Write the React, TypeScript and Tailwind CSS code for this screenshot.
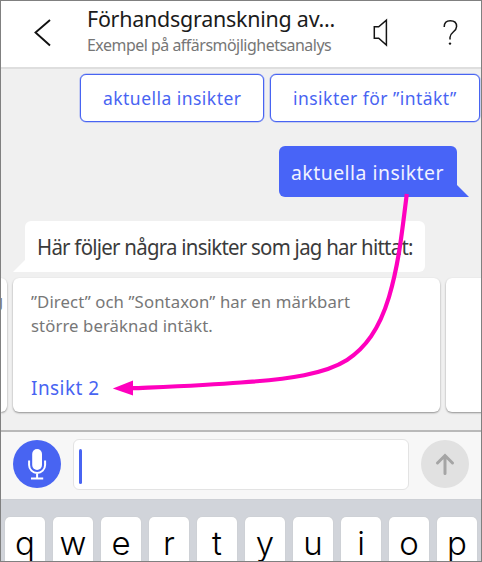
import type { ReactNode } from "react";

const keys = ["q", "w", "e", "r", "t", "y", "u", "i", "o", "p"];

function Fit({ className, children }: { className: string; children: ReactNode }) {
  return <span className={`inline-block whitespace-nowrap origin-left ${className}`}>{children}</span>;
}

function Header() {
  return (
    <header className="flex h-[66px] shrink-0 bg-white">
      <svg className="ml-[32px] mt-[17px] h-[30px] w-[20px] shrink-0" viewBox="0 0 20 30" fill="none" stroke="#111" strokeWidth="1.9">
        <path d="M17 2 L2.5 14.5 L17 27.5" />
      </svg>
      <div className="ml-[34px] w-[269px] shrink-0">
        <h1 className="h-[33px] pt-[3px] text-[22.5px] leading-[30px] text-[#1b1b1b]">
          <Fit className="tracking-[-0.25px] scale-x-[0.953]">Förhandsgranskning av...</Fit>
        </h1>
        <p className="text-[16.5px] leading-[22px] text-[#767676]">
          <Fit className="tracking-[-0.5px] scale-x-[0.965]">Exempel på affärsmöjlighetsanalys</Fit>
        </p>
      </div>
      <svg className="ml-[16px] mt-[17px] h-[30px] w-[18px] shrink-0" viewBox="0 0 18 30" fill="none" stroke="#151515" strokeWidth="1.5">
        <path d="M2.3 8.8 H6.7 L14.4 2.2 V27 L6.7 20.3 H2.3 Z" />
      </svg>
      <svg className="ml-[52px] mt-[18px] h-[28px] w-[18px] shrink-0" viewBox="0 0 18 28" fill="none" stroke="#151515" strokeWidth="1.5">
        <path d="M2.2 8 C2.2 3.7 5 1.8 8.3 1.8 C12.2 1.8 14.6 4 14.6 7.5 C14.6 12.8 8 13.2 8 18.2 V20.4" />
        <circle cx="8" cy="24.6" r="1.2" fill="#151515" stroke="none" />
      </svg>
    </header>
  );
}

function Chat() {
  return (
    <main className="relative flex h-[363px] shrink-0 flex-col overflow-hidden border-t-2 border-[#dedede] bg-[#f0f0f0]">
      <div className="ml-[79px] mt-[5px] flex h-[48px] shrink-0 gap-[6px] text-[18.5px] text-[#4864f2]">
        <div className="flex w-[184px] shrink-0 items-center rounded-[6px] border border-[#4864f2] bg-white pl-[22px] shadow-[0_0_0_0.5px_#4864f280]">
          <Fit className="tracking-[0.5px] scale-x-[0.945]">aktuella insikter</Fit>
        </div>
        <div className="flex w-[210px] shrink-0 items-center rounded-[6px] border border-[#4864f2] bg-white pl-[22px] shadow-[0_0_0_0.5px_#4864f280]">
          <Fit className="tracking-[0.5px] scale-x-[0.945]">insikter för ”intäkt”</Fit>
        </div>
      </div>
      <div className="ml-[278px] mt-[24px] flex h-[51px] shrink-0 items-end">
        <div className="flex h-full w-[178px] shrink-0 items-center rounded-md rounded-br-none bg-[#4864f7] pl-[12px] pt-[2px] text-[20px] text-[#f1f2ff]">
          <Fit className="tracking-[0.5px] scale-x-[0.97]">aktuella insikter</Fit>
        </div>
        <svg className="h-[12px] w-[12px]" viewBox="0 0 12 12"><path d="M0 0 L12 12 H0Z" fill="#4864f7" /></svg>
      </div>
      <div className="ml-[12px] mt-[24px] flex h-[51px] shrink-0 items-end">
        <svg className="h-[12px] w-[12px]" viewBox="0 0 12 12"><path d="M12 0 L0 12 H12Z" fill="white" /></svg>
        <div className="flex h-full w-[400px] shrink-0 items-center rounded-md rounded-bl-none bg-white pl-[12px] pb-px text-[22px] text-[#3b3b3b]">
          <Fit className="tracking-[-0.8px] scale-x-[0.928]">Här följer några insikter som jag har hittat:</Fit>
        </div>
      </div>
      <div className="mt-[6px] flex h-[134px] shrink-0 gap-[6px]">
        <div className="flex w-[6px] shrink-0 justify-end overflow-visible rounded-r-md bg-white shadow-[0_1px_2px_rgba(0,0,0,0.4)]">
          <span className="mr-[4px] mt-[11px] text-base text-[#777]">g</span>
        </div>
        <article className="w-[427px] shrink-0 rounded-md bg-white pl-[18px] shadow-[0_1px_2px_rgba(0,0,0,0.4)]">
          <p className="pt-[12px] text-[17px] leading-[24px] text-[#777]">
            <Fit className="tracking-[0.1px] scale-x-[0.985]">”Direct” och ”Sontaxon” har en märkbart</Fit>
            <br />
            <Fit className="tracking-[0.1px] scale-x-[0.982]">större beräknad intäkt.</Fit>
          </p>
          <a className="block pt-[34px] text-[20.5px] leading-[30px] text-[#4864f2]">
            <Fit className="tracking-[0.5px] scale-x-[0.925]">Insikt 2</Fit>
          </a>
        </article>
        <div className="w-[45px] shrink-0 rounded-l-md bg-white shadow-[0_1px_2px_rgba(0,0,0,0.4)]" />
      </div>
      <svg className="absolute -left-px -top-[69px] h-[432px] w-[482px]" viewBox="0 0 482 432" fill="none">
        <path d="M406.8 194 C402 232 399 263 389 297 C379 330 365 348 347 360 C325 374 290 379 241 382.5 C205 385.5 160 387 132 388.2" stroke="#ff00be" strokeWidth="4.2" />
        <path d="M112.8 388.5 L133 380.5 V395.5Z" fill="#ff00be" />
      </svg>
    </main>
  );
}

function InputBar() {
  return (
    <div className="flex h-[69px] shrink-0 items-start border-t-2 border-[#b9b9b9] bg-[#f7f7f7]">
      <div className="ml-[12px] mt-[8px] h-[48px] w-[48px] shrink-0 rounded-full bg-[#4864f2]">
        <svg className="h-[48px] w-[48px]" viewBox="0 0 48 48" fill="none" stroke="white" strokeWidth="2">
          <rect x="19.2" y="9" width="9.8" height="21" rx="4.9" fill="white" stroke="none" />
          <path d="M16.1 20.5 V25 A8 8 0 0 0 32.1 25 V20.5 M24.1 33 V38 M18 38.5 H30.2" />
        </svg>
      </div>
      <div className="ml-[12px] mt-[7px] h-[51px] w-[336px] shrink-0 rounded-md border border-[#e3e3e3] bg-white pl-[5px] pt-[9px]">
        <div className="h-[35px] w-[3px] rounded-sm bg-[#4864f2]" />
      </div>
      <div className="ml-[12px] mt-[8px] h-[48px] w-[48px] shrink-0 rounded-full bg-[#e1e1e1]">
        <svg className="h-[48px] w-[48px]" viewBox="0 0 48 48" fill="none" stroke="#a5a5a5" strokeWidth="3" strokeLinecap="round">
          <path d="M24 33.5 V16 M16.5 23 L24 15.5 L31.5 23" />
        </svg>
      </div>
    </div>
  );
}

export default function App() {
  return (
    <div className="flex h-[562px] w-[482px] flex-col overflow-hidden border border-[#808080] bg-[#d1d4da] font-['Noto_Sans',sans-serif]">
      <Header />
      <Chat />
      <InputBar />
      <div className="flex min-h-0 flex-1 items-start gap-2 overflow-hidden border-t border-[#cdd0d5] pl-1 pt-[17px] font-[Inter,sans-serif]">
        {keys.map((key) => (
          <div key={key} className="h-[44px] w-10 shrink-0 rounded-t-[5px] bg-white pt-[9px] text-center text-[33px] leading-[34px] font-[350] text-black shadow-[0_0_1px_#bbb]">
            {key}
          </div>
        ))}
      </div>
    </div>
  );
}
